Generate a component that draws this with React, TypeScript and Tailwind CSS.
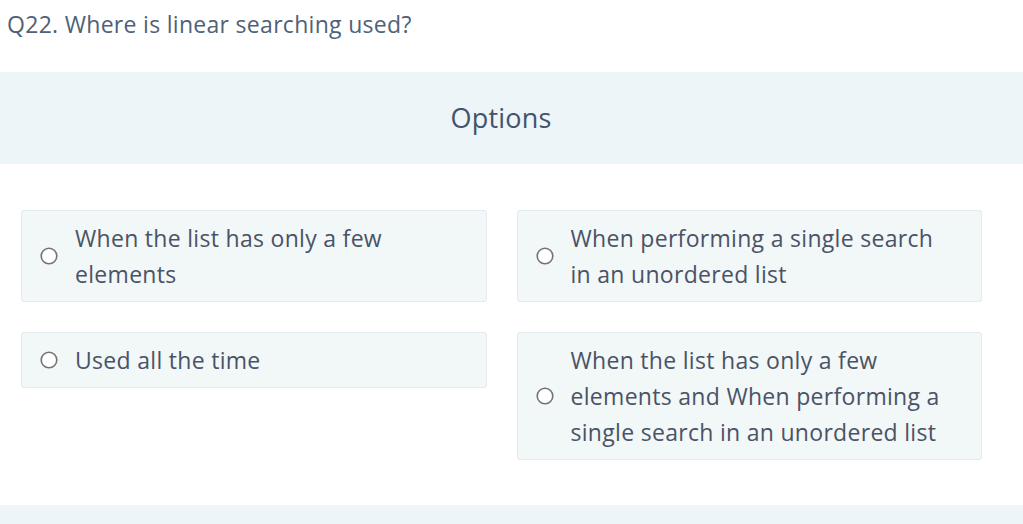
const options = [
  "When the list has only a few elements",
  "When performing a single search in an unordered list",
  "Used all the time",
  "When the list has only a few elements and When performing a single search in an unordered list",
];

function Radio() {
  return (
    <svg width="18" height="18" viewBox="0 0 18 18" className="shrink-0">
      <circle cx="9" cy="9" r="7.8" fill="#fff" stroke="#737373" strokeWidth="1.6" />
    </svg>
  );
}

export default function App() {
  return (
    <div
      className="min-h-[524px] bg-white text-[#4a5366]"
      style={{ fontFamily: '"Open Sans", "Noto Sans", sans-serif' }}
    >
      <div className="px-[7px] pt-[8px] text-[23px] leading-[32px] tracking-[0.3px] text-[#4f6177]">
        Q22. Where is linear searching used?
      </div>

      <div className="mt-[32px] flex h-[92px] items-center justify-center bg-[#edf5f8] pr-[21px]">
        <span className="text-[27px] tracking-[0.2px] text-[#42546b]">Options</span>
      </div>

      <div className="grid grid-cols-2 items-start gap-x-[30px] gap-y-[30px] pl-[21px] pr-[41px] pt-[46px]">
        {options.map((text) => (
          <label
            key={text}
            className="flex items-center rounded-[3px] border border-[#e3ebee] bg-[#f2f7f8] py-[9px] pl-[18px] pr-[30px]"
          >
            <Radio />
            <span className="ml-[17px] text-[23px] leading-[36px] tracking-[0.3px]">{text}</span>
          </label>
        ))}
      </div>

      <div className="mt-[45px] h-[19px] bg-[#edf5f8]" />
    </div>
  );
}
